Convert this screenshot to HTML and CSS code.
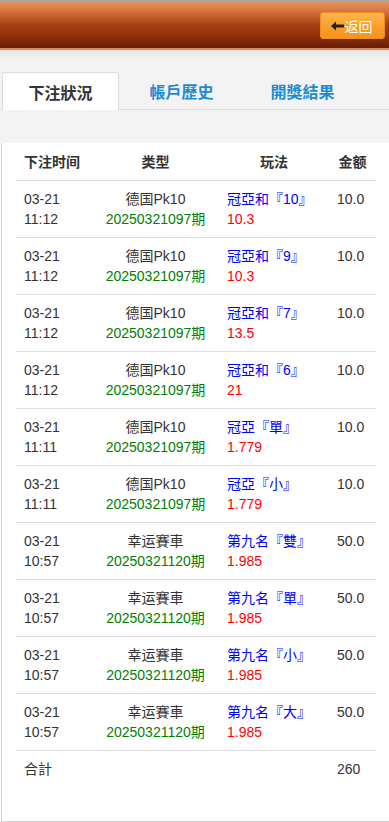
FILE: index.html
```html
<!DOCTYPE html>
<html lang="zh">
<head>
<meta charset="utf-8">
<link rel="stylesheet" href="styles.css">
</head>
<body>
<div class="header">
  <a class="back-btn"><svg class="back-arrow" width="13" height="10" viewBox="0 0 13 10"><path d="M0 5 L5 0.5 L5 3.5 L13 3.5 L13 6.5 L5 6.5 L5 9.5 Z" fill="#222"/></svg>返回</a>
</div>
<div class="gray-area">
  <div class="tabs">
    <div class="tab active">下注狀況</div>
    <div class="tab">帳戶歷史</div>
    <div class="tab">開獎結果</div>
  </div>
</div>
<div class="content">
  <table class="bets">
    <colgroup><col class="c1"><col class="c2"><col class="c3"><col class="c4"></colgroup>
    <thead>
      <tr><th class="th-time">下注时间</th><th>类型</th><th>玩法</th><th>金额</th></tr>
    </thead>
    <tbody>
      <tr><td>03-21<br>11:12</td><td class="type">德国Pk10<br><span class="green">20250321097期</span></td><td><span class="blue">冠亞和『10』</span><br><span class="red">10.3</span></td><td>10.0</td></tr>
      <tr><td>03-21<br>11:12</td><td class="type">德国Pk10<br><span class="green">20250321097期</span></td><td><span class="blue">冠亞和『9』</span><br><span class="red">10.3</span></td><td>10.0</td></tr>
      <tr><td>03-21<br>11:12</td><td class="type">德国Pk10<br><span class="green">20250321097期</span></td><td><span class="blue">冠亞和『7』</span><br><span class="red">13.5</span></td><td>10.0</td></tr>
      <tr><td>03-21<br>11:12</td><td class="type">德国Pk10<br><span class="green">20250321097期</span></td><td><span class="blue">冠亞和『6』</span><br><span class="red">21</span></td><td>10.0</td></tr>
      <tr><td>03-21<br>11:11</td><td class="type">德国Pk10<br><span class="green">20250321097期</span></td><td><span class="blue">冠亞『單』</span><br><span class="red">1.779</span></td><td>10.0</td></tr>
      <tr><td>03-21<br>11:11</td><td class="type">德国Pk10<br><span class="green">20250321097期</span></td><td><span class="blue">冠亞『小』</span><br><span class="red">1.779</span></td><td>10.0</td></tr>
      <tr><td>03-21<br>10:57</td><td class="type">幸运賽車<br><span class="green">20250321120期</span></td><td><span class="blue">第九名『雙』</span><br><span class="red">1.985</span></td><td>50.0</td></tr>
      <tr><td>03-21<br>10:57</td><td class="type">幸运賽車<br><span class="green">20250321120期</span></td><td><span class="blue">第九名『單』</span><br><span class="red">1.985</span></td><td>50.0</td></tr>
      <tr><td>03-21<br>10:57</td><td class="type">幸运賽車<br><span class="green">20250321120期</span></td><td><span class="blue">第九名『小』</span><br><span class="red">1.985</span></td><td>50.0</td></tr>
      <tr><td>03-21<br>10:57</td><td class="type">幸运賽車<br><span class="green">20250321120期</span></td><td><span class="blue">第九名『大』</span><br><span class="red">1.985</span></td><td>50.0</td></tr>
      <tr class="total"><td>合計</td><td></td><td></td><td>260</td></tr>
    </tbody>
  </table>
</div>
</body>
</html>
```

FILE: styles.css
```css
html, body {
  margin: 0;
  padding: 0;
}
body {
  background: #fff;
  font-family: "Liberation Sans", "Noto Sans CJK SC", sans-serif;
  font-size: 14px;
  color: #333;
  width: 389px;
  overflow: hidden;
}
.header {
  height: 47px;
  border-top: 1px solid #a8a8a8;
  border-bottom: 2px solid #d88b57;
  background: linear-gradient(to bottom, #ea9562 0%, #d7733f 22%, #a83f13 50%, #8c310b 75%, #691d04 100%);
  display: flex;
  justify-content: flex-end;
  align-items: flex-start;
  padding-right: 4px;
  box-sizing: content-box;
}
.back-btn {
  margin-top: 11px;
  width: 65px;
  height: 27px;
  border: 1px solid #e9921f;
  border-radius: 3px;
  background: linear-gradient(to bottom, #fdb64e 0%, #f99c25 60%, #f7941c 100%);
  color: #fff;
  font-size: 14px;
  display: flex;
  align-items: center;
  justify-content: center;
  gap: 1px;
  padding-right: 2px;
  box-sizing: border-box;
}
.back-arrow {
  display: block;
}
.gray-area {
  background: linear-gradient(to bottom, #e4e4e4 0px, #f1f1f1 8px, #f3f3f3 20px);
  height: 93px;
  padding-top: 22px;
  box-sizing: border-box;
}
.tabs {
  display: flex;
  padding-left: 2px;
  border-bottom: 1px solid #dcdcdc;
  height: 37px;
  gap: 4px;
}
.tab {
  width: 117px;
  height: 37px;
  box-sizing: border-box;
  display: flex;
  align-items: center;
  justify-content: center;
  font-size: 16px;
  font-weight: bold;
  color: #1a8bd4;
  padding-top: 1px;
}
.tab.active {
  background: #fff;
  color: #333;
  border: 1px solid #dcdcdc;
  border-bottom: none;
  border-radius: 3px 3px 0 0;
  height: 38px;
  margin-bottom: -1px;
}
.content {
  margin-left: 1px;
  border-left: 1px solid #cfcfcf;
  border-bottom: 1px solid #cfcfcf;
  height: 678px;
  padding-left: 14px;
  background: #fff;
}
.bets {
  width: 360px;
  border-collapse: collapse;
  table-layout: fixed;
}
.c1 { width: 76px; }
.c2 { width: 127px; }
.c3 { width: 110px; }
.c4 { width: 47px; }
.bets th {
  font-weight: bold;
  text-align: center;
  height: 37px;
  padding: 0;
  line-height: 20px;
  border-bottom: 1px solid #ddd;
  vertical-align: middle;
  white-space: nowrap;
}
.bets th.th-time {
  text-align: left;
  padding-left: 8px;
}
.bets td {
  padding: 8px 0 8px 8px;
  line-height: 20px;
  border-bottom: 1px solid #ddd;
  vertical-align: top;
  white-space: nowrap;
}
.bets td.type {
  text-align: center;
  padding-left: 0;
}
.bets tr.total td {
  border-bottom: none;
}
.green { color: #008000; }
.blue { color: #0000ff; }
.red { color: #ff0000; }
```
